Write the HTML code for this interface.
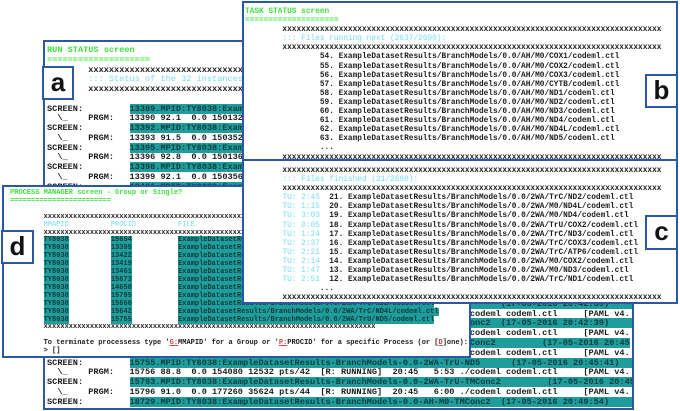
<!DOCTYPE html>
<html><head><meta charset="utf-8"><style>
body{margin:0;width:680px;height:411px;background:#fff;position:relative;overflow:hidden;font-family:"Liberation Mono",monospace;}
.p{position:absolute;background:#fff;border:2px solid #2b58a6;box-sizing:border-box;overflow:hidden;}
.t{position:absolute;white-space:pre;color:#1c1c1c;font-weight:bold;}
.g{color:#3fe03f;}
.c{color:#74dff0;font-weight:normal;}
.h{background:#1f9c9c;color:#0b3b3b;}
.r{color:#e04040;text-decoration:underline;}
.lab{position:absolute;background:#fff;border:2px solid #2b58a6;box-sizing:border-box;font-family:"Liberation Sans",sans-serif;font-weight:bold;font-size:26px;line-height:28px;text-align:center;color:#111;}
</style></head><body>

<!-- RUN STATUS -->
<div class="p" style="left:43px;top:40px;width:591px;height:370px;">
<div class="t" style="left:2px;top:4px;font-size:8.6px;line-height:9.77px;"><span class="g">RUN STATUS screen</span>
<span class="g">====================</span>
        xxxxxxxxxxxxxxxxxxxxxxxxxxxxxxxxxxxxxxxxxxxxxxxxxxxxxxxxxxxxxxxxxxxxxxxxxxxxxxxxxxxxxxxxxxxxxxxxx
        <span class="c">::: Status of the 32 instances running</span>
        xxxxxxxxxxxxxxxxxxxxxxxxxxxxxxxxxxxxxxxxxxxxxxxxxxxxxxxxxxxxxxxxxxxxxxxxxxxxxxxxxxxxxxxxxxxxxxxxx

SCREEN:         <span class="h">13389.MPID:TY8038:ExampleDatasetResults-BranchModels-0.0-AH-M0-COX1     (17-05-2016 20:40:11)     (</span>
  \_    PRGM:   13390 92.1  0.0 150132 12508 pts/30  [R: RUNNING]  20:40   5:53 ./codeml codeml.ctl     [PAML v4.
SCREEN:         <span class="h">13392.MPID:TY8038:ExampleDatasetResults-BranchModels-0.0-AH-M0-COX2     (17-05-2016 20:40:11)     (</span>
  \_    PRGM:   13393 91.5  0.0 150352 12508 pts/31  [R: RUNNING]  20:40   5:53 ./codeml codeml.ctl     [PAML v4.
SCREEN:         <span class="h">13395.MPID:TY8038:ExampleDatasetResults-BranchModels-0.0-AH-M0-COX3     (17-05-2016 20:40:11)     (</span>
  \_    PRGM:   13396 92.8  0.0 150136 12508 pts/32  [R: RUNNING]  20:40   5:53 ./codeml codeml.ctl     [PAML v4.
SCREEN:         <span class="h">13398.MPID:TY8038:ExampleDatasetResults-BranchModels-0.0-AH-M0-CYTB     (17-05-2016 20:40:11)     (</span>
  \_    PRGM:   13399 92.1  0.0 150356 12508 pts/33  [R: RUNNING]  20:40   5:53 ./codeml codeml.ctl     [PAML v4.
SCREEN:         <span class="h">13401.MPID:TY8038:ExampleDatasetResults-BranchModels-0.0-AH-M0-ND1      (17-05-2016 20:40:11)     (</span>
  \_    PRGM:   13402 92.1  0.0 150356 12508 pts/34  [R: RUNNING]  20:40   5:53 ./codeml codeml.ctl     [PAML v4.
SCREEN:         <span class="h">13404.MPID:TY8038:ExampleDatasetResults-BranchModels-0.0-AH-M0-ND2      (17-05-2016 20:40:11)     (</span>
  \_    PRGM:   13405 92.1  0.0 150356 12508 pts/35  [R: RUNNING]  20:40   5:53 ./codeml codeml.ctl     [PAML v4.
SCREEN:         <span class="h">13407.MPID:TY8038:ExampleDatasetResults-BranchModels-0.0-AH-M0-ND3      (17-05-2016 20:40:11)     (</span>
  \_    PRGM:   13408 92.1  0.0 150356 12508 pts/36  [R: RUNNING]  20:40   5:53 ./codeml codeml.ctl     [PAML v4.
SCREEN:         <span class="h">13410.MPID:TY8038:ExampleDatasetResults-BranchModels-0.0-AH-M0-ND4      (17-05-2016 20:40:11)     (</span>
  \_    PRGM:   13411 92.1  0.0 150356 12508 pts/37  [R: RUNNING]  20:40   5:53 ./codeml codeml.ctl     [PAML v4.
SCREEN:         <span class="h">13413.MPID:TY8038:ExampleDatasetResults-BranchModels-0.0-AH-M0-ND4L     (17-05-2016 20:40:11)     (</span>
  \_    PRGM:   13414 92.1  0.0 150356 12508 pts/38  [R: RUNNING]  20:40   5:53 ./codeml codeml.ctl     [PAML v4.
SCREEN:         <span class="h">13416.MPID:TY8038:ExampleDatasetResults-BranchModels-0.0-AH-M0-ND5      (17-05-2016 20:40:11)     (</span>
  \_    PRGM:   13417 92.1  0.0 150356 12508 pts/39  [R: RUNNING]  20:40   5:53 ./codeml codeml.ctl     [PAML v4.
SCREEN:         <span class="h">13419.MPID:TY8038:ExampleDatasetResults-BranchModels-0.0-AH-M0-ND6      (17-05-2016 20:42:39)     (Detached</span>
  \_    PRGM:   13420 92.1  0.0 150356 12508 pts/40  [R: RUNNING]  20:42   5:53 ./codeml codeml.ctl     [PAML v4.
SCREEN:         <span class="h">13422.MPID:TY8038:ExampleDatasetResults-BranchModels-0.0-AH-M0-TMConc2  (17-05-2016 20:42:39)     (</span>
  \_    PRGM:   13423 92.1  0.0 150356 12508 pts/41  [R: RUNNING]  20:42   5:53 ./codeml codeml.ctl     [PAML v4.
SCREEN:         <span class="h">13425.MPID:TY8038:ExampleDatasetResults-BranchModels-0.0-2WA-M0-TMConc2         (17-05-2016 20:45</span>
  \_    PRGM:   13426 92.1  0.0 150356 12508 pts/41  [R: RUNNING]  20:45   5:53 ./codeml codeml.ctl     [PAML v4.
SCREEN:         <span class="h">15755.MPID:TY8038:ExampleDatasetResults-BranchModels-0.0-2WA-TrU-ND5      (17-05-2016 20:45:41)     (</span>
  \_    PRGM:   15756 88.8  0.0 154080 12532 pts/42  [R: RUNNING]  20:45   5:53 ./codeml codeml.ctl     [PAML v4.
SCREEN:         <span class="h">15793.MPID:TY8038:ExampleDatasetResults-BranchModels-0.0-2WA-TrU-TMConc2         (17-05-2016 20:45</span>
  \_    PRGM:   15796 91.0  0.0 177260 35624 pts/44  [R: RUNNING]  20:45   6:00 ./codeml codeml.ctl     [PAML v4.
SCREEN:         <span class="h">18729.MPID:TY8038:ExampleDatasetResults-BranchModels-0.0-AH-M0-TMConc2  (17-05-2016 20:49:54)     (</span></div>
</div>

<!-- TASK STATUS b -->
<div class="p" style="left:242px;top:1px;width:436px;height:160px;">
<div class="t" style="left:1px;top:5px;font-size:7.8px;line-height:9.1px;"><span class="g">TASK STATUS screen</span>
<span class="g">====================</span>
        xxxxxxxxxxxxxxxxxxxxxxxxxxxxxxxxxxxxxxxxxxxxxxxxxxxxxxxxxxxxxxxxxxxxxxxxxxxxxxxxx
        <span class="c">::: Files running next (2637/2690):</span>
        xxxxxxxxxxxxxxxxxxxxxxxxxxxxxxxxxxxxxxxxxxxxxxxxxxxxxxxxxxxxxxxxxxxxxxxxxxxxxxxxx
                54. ExampleDatasetResults/BranchModels/0.0/AH/M0/COX1/codeml.ctl
                55. ExampleDatasetResults/BranchModels/0.0/AH/M0/COX2/codeml.ctl
                56. ExampleDatasetResults/BranchModels/0.0/AH/M0/COX3/codeml.ctl
                57. ExampleDatasetResults/BranchModels/0.0/AH/M0/CYTB/codeml.ctl
                58. ExampleDatasetResults/BranchModels/0.0/AH/M0/ND1/codeml.ctl
                59. ExampleDatasetResults/BranchModels/0.0/AH/M0/ND2/codeml.ctl
                60. ExampleDatasetResults/BranchModels/0.0/AH/M0/ND3/codeml.ctl
                61. ExampleDatasetResults/BranchModels/0.0/AH/M0/ND4/codeml.ctl
                62. ExampleDatasetResults/BranchModels/0.0/AH/M0/ND4L/codeml.ctl
                63. ExampleDatasetResults/BranchModels/0.0/AH/M0/ND5/codeml.ctl
                ...
        xxxxxxxxxxxxxxxxxxxxxxxxxxxxxxxxxxxxxxxxxxxxxxxxxxxxxxxxxxxxxxxxxxxxxxxxxxxxxxxxx</div>
</div>

<!-- PROCESS MANAGER d -->
<div class="p" style="left:2px;top:185px;width:469px;height:173px;">
<div class="t" style="left:6px;top:3px;font-size:7px;line-height:7.9px;"><span class="g">PROCESS MANAGER screen - Group or Single?</span>
<span class="g">========================</span>

        xxxxxxxxxxxxxxxxxxxxxxxxxxxxxxxxxxxxxxxxxxxxxxxxxxxxxxxxxxxxxxxxxxxxxxxxxxxxxxxxxxxxxxxxxxxxxxxxxx
        <span class="c">MMAPID          PROCID          FILE</span>
        xxxxxxxxxxxxxxxxxxxxxxxxxxxxxxxxxxxxxxxxxxxxxxxxxxxxxxxxxxxxxxxxxxxxxxxxxxxxxxxxxxxxxxxxxxxxxxxxxx
        <span class="h">TY8038</span>          <span class="h">15654</span>           <span class="h">ExampleDatasetResults/BranchModels/0.0/2WA/TrU/TMConc2/codeml.ctl</span>
        <span class="h">TY8038</span>          <span class="h">13395</span>           <span class="h">ExampleDatasetResults/BranchModels/0.0/AH/M0/COX3/codeml.ctl</span>
        <span class="h">TY8038</span>          <span class="h">13422</span>           <span class="h">ExampleDatasetResults/BranchModels/0.0/2WA/M0/TMConc2/codeml.ctl</span>
        <span class="h">TY8038</span>          <span class="h">13419</span>           <span class="h">ExampleDatasetResults/BranchModels/0.0/AH/M0/TMConc2/codeml.ctl</span>
        <span class="h">TY8038</span>          <span class="h">13461</span>           <span class="h">ExampleDatasetResults/BranchModels/0.0/2WA/TrC/COX1/codeml.ctl</span>
        <span class="h">TY8038</span>          <span class="h">15673</span>           <span class="h">ExampleDatasetResults/BranchModels/0.0/2WA/TrU/ND1/codeml.ctl</span>
        <span class="h">TY8038</span>          <span class="h">14658</span>           <span class="h">ExampleDatasetResults/BranchModels/0.0/2WA/TrC/CYTB/codeml.ctl</span>
        <span class="h">TY8038</span>          <span class="h">15795</span>           <span class="h">ExampleDatasetResults/BranchModels/0.0/2WA/TrU/TMConc2/codeml.ctl</span>
        <span class="h">TY8038</span>          <span class="h">15666</span>           <span class="h">ExampleDatasetResults/BranchModels/0.0/2WA/TrU/ND2/codeml.ctl</span>
        <span class="h">TY8038</span>          <span class="h">15642</span>           <span class="h">ExampleDatasetResults/BranchModels/0.0/2WA/TrC/ND4L/codeml.ctl</span>
        <span class="h">TY8038</span>          <span class="h">15755</span>           <span class="h">ExampleDatasetResults/BranchModels/0.0/2WA/TrU/ND5/codeml.ctl</span>
        xxxxxxxxxxxxxxxxxxxxxxxxxxxxxxxxxxxxxxxxxxxxxxxxxxxxxxxxxxxxxxxxxxxxxxxxxxxxxxx

        To terminate processess type '<span class="r">G:</span>MMAPID' for a Group or '<span class="r">P:</span>PROCID' for a specific Process (or [<span class="r">D</span>]one):
        &gt; []</div>
</div>

<!-- FILES FINISHED c -->
<div class="p" style="left:242px;top:159px;width:436px;height:145px;">
<div class="t" style="left:1px;top:6px;font-size:7.8px;line-height:9.1px;">        xxxxxxxxxxxxxxxxxxxxxxxxxxxxxxxxxxxxxxxxxxxxxxxxxxxxxxxxxxxxxxxxxxxxxxxxxxxxxxxxx
        <span class="c">::: Files finished (21/2690):</span>
        xxxxxxxxxxxxxxxxxxxxxxxxxxxxxxxxxxxxxxxxxxxxxxxxxxxxxxxxxxxxxxxxxxxxxxxxxxxxxxxxx
        <span class="c">TU: 2:45</span>  21. ExampleDatasetResults/BranchModels/0.0/2WA/TrC/ND2/codeml.ctl
        <span class="c">TU: 1:15</span>  20. ExampleDatasetResults/BranchModels/0.0/2WA/M0/ND4L/codeml.ctl
        <span class="c">TU: 3:03</span>  19. ExampleDatasetResults/BranchModels/0.0/2WA/M0/ND4/codeml.ctl
        <span class="c">TU: 0:05</span>  18. ExampleDatasetResults/BranchModels/0.0/2WA/TrU/COX2/codeml.ctl
        <span class="c">TU: 1:24</span>  17. ExampleDatasetResults/BranchModels/0.0/2WA/TrC/ND3/codeml.ctl
        <span class="c">TU: 2:37</span>  16. ExampleDatasetResults/BranchModels/0.0/2WA/TrC/COX3/codeml.ctl
        <span class="c">TU: 2:21</span>  15. ExampleDatasetResults/BranchModels/0.0/2WA/TrC/ATP6/codeml.ctl
        <span class="c">TU: 2:14</span>  14. ExampleDatasetResults/BranchModels/0.0/2WA/M0/COX2/codeml.ctl
        <span class="c">TU: 1:47</span>  13. ExampleDatasetResults/BranchModels/0.0/2WA/M0/ND3/codeml.ctl
        <span class="c">TU: 2:51</span>  12. ExampleDatasetResults/BranchModels/0.0/2WA/TrC/ND1/codeml.ctl
                ...
        xxxxxxxxxxxxxxxxxxxxxxxxxxxxxxxxxxxxxxxxxxxxxxxxxxxxxxxxxxxxxxxxxxxxxxxxxxxxxxxxx</div>
</div>

<div class="lab" style="left:42px;top:66px;width:32px;height:34px;">a</div>
<div class="lab" style="left:645px;top:74px;width:33px;height:34px;">b</div>
<div class="lab" style="left:645px;top:215px;width:33px;height:35px;">c</div>
<div class="lab" style="left:1px;top:230px;width:33px;height:34px;">d</div>
</body></html>
